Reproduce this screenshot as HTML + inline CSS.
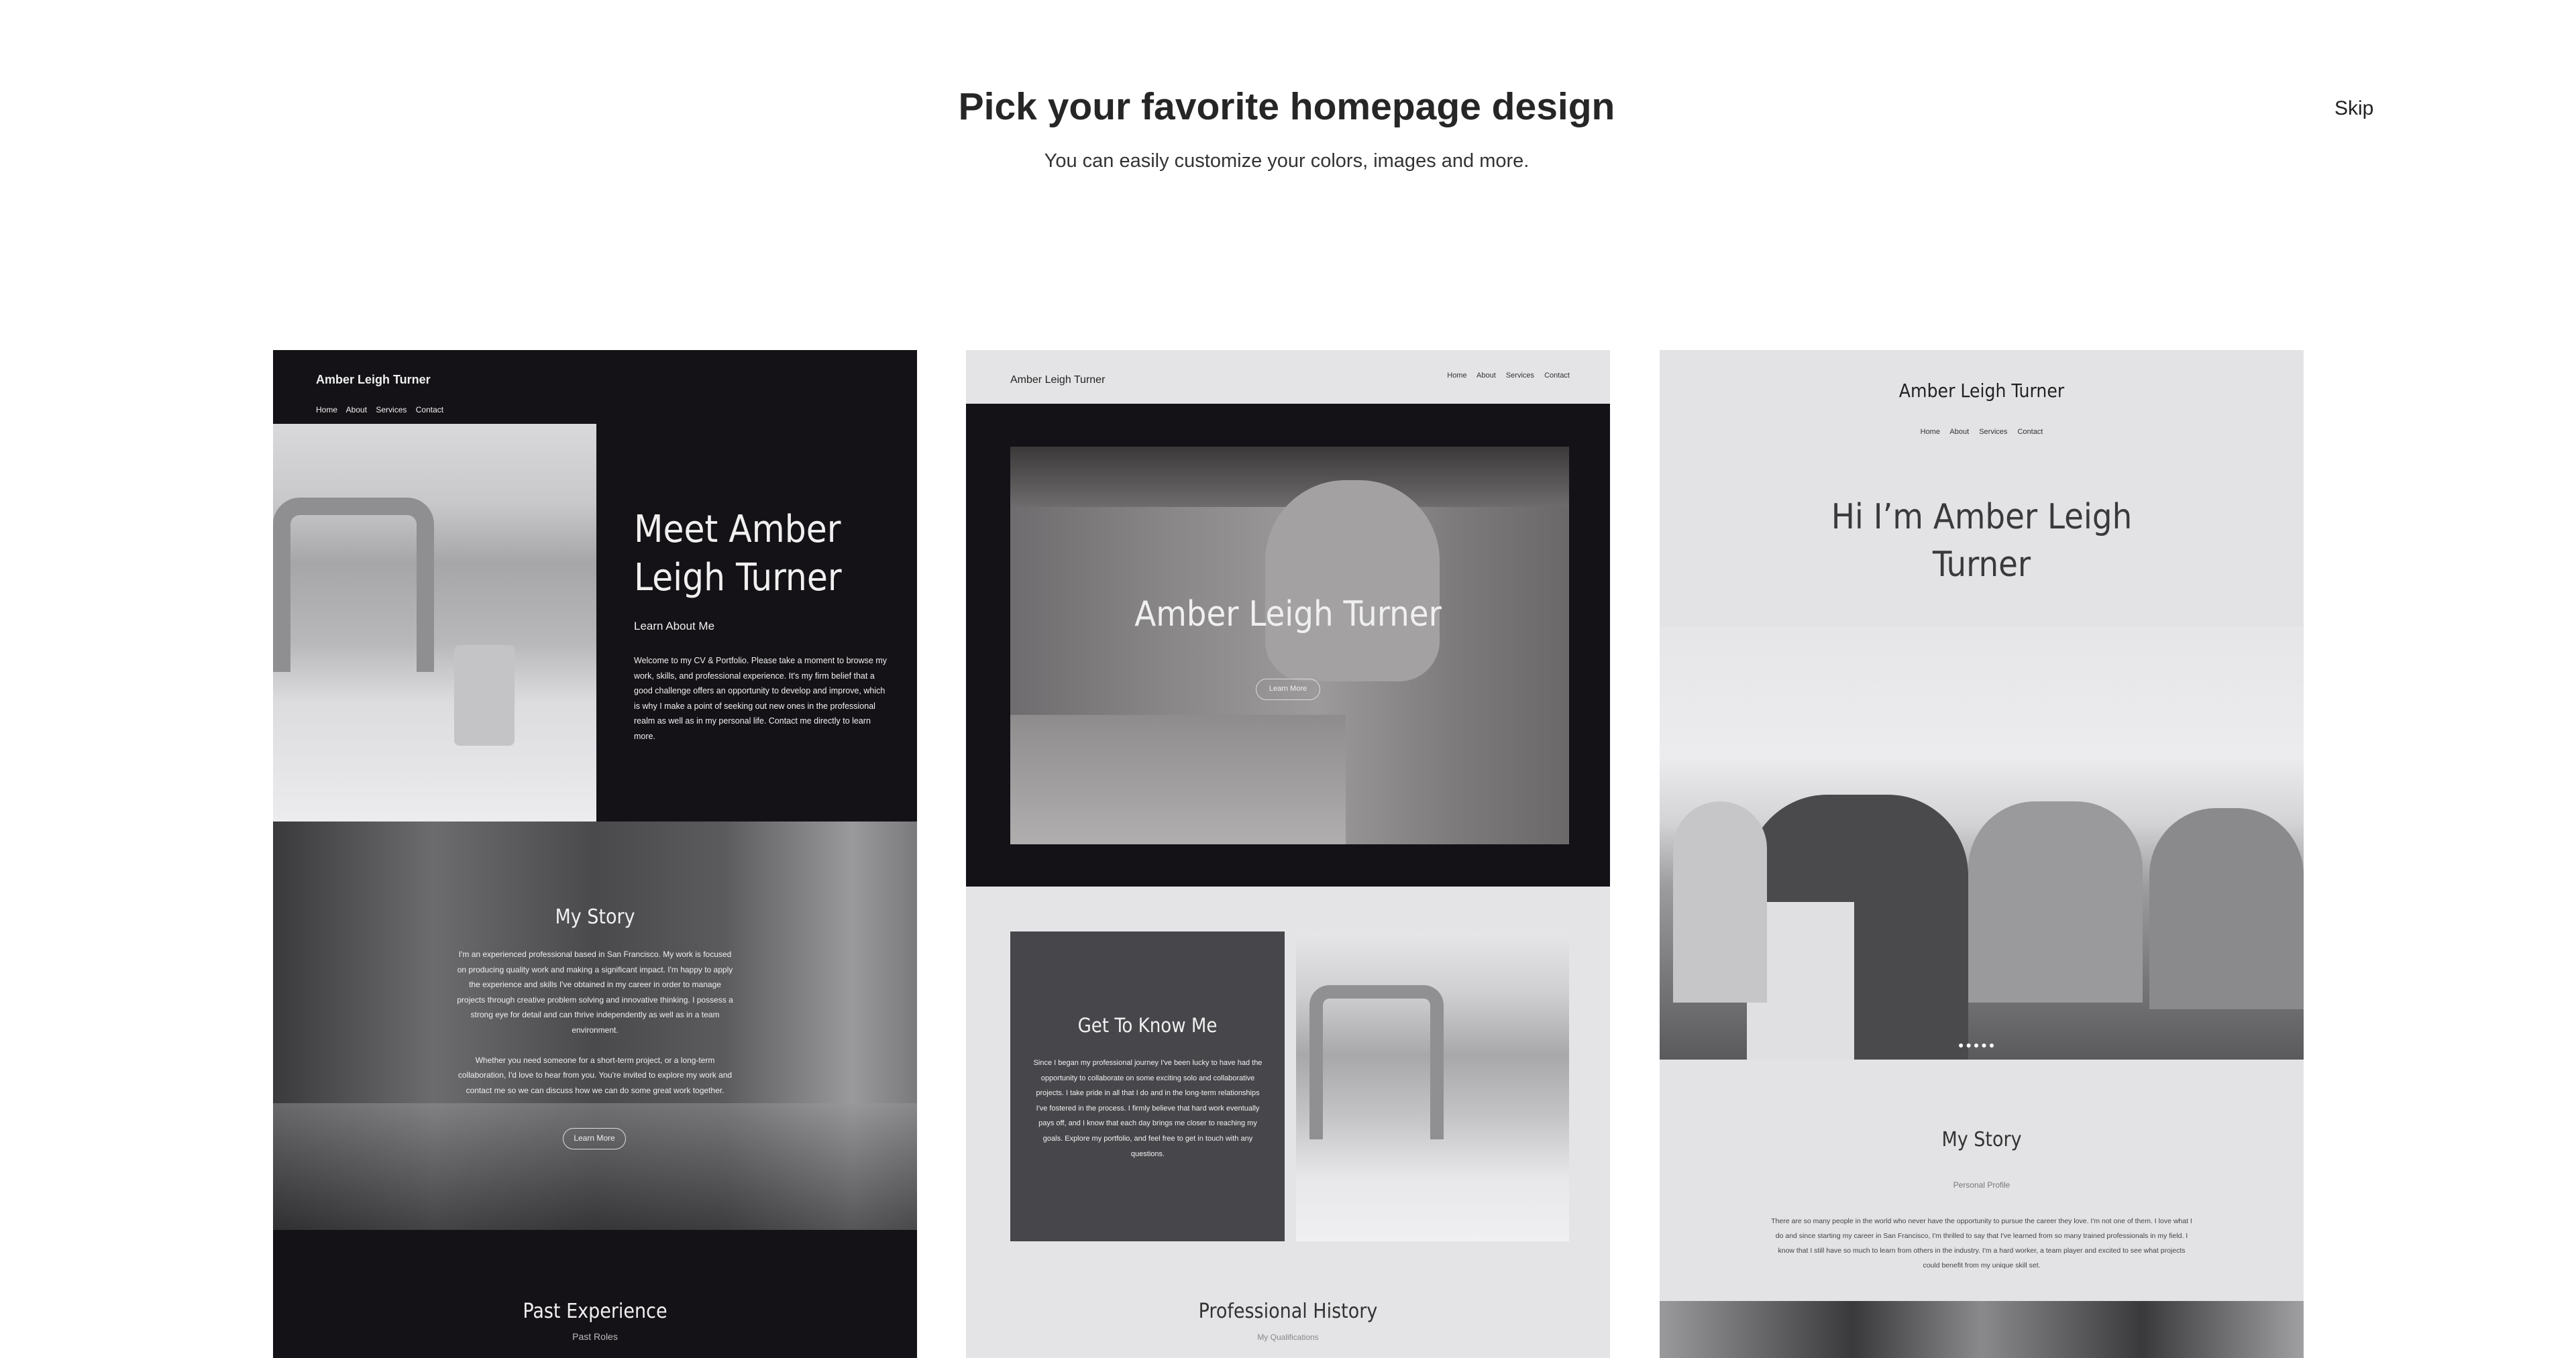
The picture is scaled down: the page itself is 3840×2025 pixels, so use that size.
<!DOCTYPE html>
<html><head><meta charset="utf-8"><style>
*{margin:0;padding:0;box-sizing:border-box}
body{width:3840px;height:2025px;background:#fff;position:relative;overflow:hidden;font-family:"Liberation Sans",sans-serif;color:#2b2b2b}
.a{position:absolute}
.c{text-align:center}
.card{position:absolute;top:522px;width:960px;height:1503px;overflow:hidden}
.ttl{font-family:"DejaVu Sans Condensed","DejaVu Sans",sans-serif;font-weight:normal}
.w{color:#f0f0f0}
</style></head><body>
<div class="a c" style="left:0;width:3836px;top:126px;font-size:57px;font-weight:bold;color:#262626">Pick your favorite homepage design</div>
<div class="a c" style="left:0;width:3836px;top:224px;font-size:29px;color:#333">You can easily customize your colors, images and more.</div>
<div class="a" style="left:3480px;top:145px;font-size:30px;color:#222">Skip</div>

<!-- card 1 -->
<div class="card" style="left:407px;background:#141216">
 <div class="a w" style="left:64px;top:34px;font-size:18px;font-weight:bold">Amber Leigh Turner</div>
 <div class="a w" style="left:64px;top:82px;font-size:12px;word-spacing:10px">Home About Services Contact</div>
 <div class="a" style="left:0;top:110px;width:482px;height:593px;background:linear-gradient(180deg,#d9d9db 0%,#c8c8ca 20%,#a6a6a8 35%,#b8b8ba 55%,#dcdcde 70%,#ececee 100%)">
  <div class="a" style="left:0;top:110px;width:240px;height:260px;border:26px solid #8f8f91;border-radius:40px 40px 0 0;border-bottom:none"></div>
  <div class="a" style="left:270px;top:330px;width:90px;height:150px;background:#c4c4c6;border-radius:8px"></div>
 </div>
 <div class="a ttl w" style="left:538px;top:232px;font-size:56px;line-height:72px">Meet Amber<br>Leigh Turner</div>
 <div class="a w" style="left:538px;top:402px;font-size:17px">Learn About Me</div>
 <div class="a w" style="left:538px;top:452px;width:380px;font-size:12.5px;line-height:22.6px">Welcome to my CV &amp; Portfolio. Please take a moment to browse my work, skills, and professional experience. It's my firm belief that a good challenge offers an opportunity to develop and improve, which is why I make a point of seeking out new ones in the professional realm as well as in my personal life. Contact me directly to learn more.</div>
 <div class="a" style="left:0;top:703px;width:960px;height:609px;background:linear-gradient(90deg,#3a393c 0%,#6c6b6e 25%,#4a494c 50%,#5b5a5d 70%,#9a999c 90%,#7a797c 100%)">
  <div class="a" style="left:0;top:420px;width:960px;height:189px;background:linear-gradient(180deg,rgba(150,150,152,.5),rgba(40,40,42,.6))"></div>
 </div>
 <div class="a ttl c w" style="left:0;width:960px;top:828px;font-size:30px">My Story</div>
 <div class="a c w" style="left:270px;width:420px;top:890px;font-size:12px;line-height:22.5px">I'm an experienced professional based in San Francisco. My work is focused on producing quality work and making a significant impact. I'm happy to apply the experience and skills I've obtained in my career in order to manage projects through creative problem solving and innovative thinking. I possess a strong eye for detail and can thrive independently as well as in a team environment.<br><br>Whether you need someone for a short-term project, or a long-term collaboration, I'd love to hear from you. You're invited to explore my work and contact me so we can discuss how we can do some great work together.</div>
 <div class="a c w" style="left:432px;top:1160px;width:94px;height:32px;border:1.5px solid #ddd;border-radius:16px;font-size:12px;line-height:29px">Learn More</div>
 <div class="a ttl c w" style="left:0;width:960px;top:1416px;font-size:30px">Past Experience</div>
 <div class="a c" style="left:0;width:960px;top:1463px;font-size:14px;color:#bbb">Past Roles</div>
</div>

<!-- card 2 -->
<div class="card" style="left:1440px;background:#e4e4e6">
 <div class="a" style="left:66px;top:36px;font-size:16px;color:#222">Amber Leigh Turner</div>
 <div class="a" style="right:60px;top:32px;font-size:11px;color:#333;word-spacing:12px">Home About Services Contact</div>
 <div class="a" style="left:0;top:80px;width:960px;height:720px;background:#141216"></div>
 <div class="a" style="left:66px;top:144px;width:833px;height:593px;background:linear-gradient(90deg,#6e6c6e 0%,#8a8888 30%,#9c9a9a 55%,#7c7a7a 80%,#6a6868 100%)">
  <div class="a" style="left:0;top:0;width:833px;height:90px;background:linear-gradient(180deg,#3a3838,#6e6c6c)"></div>
  <div class="a" style="left:0;top:400px;width:500px;height:193px;background:linear-gradient(180deg,#8e8c8c,#b0aeae)"></div>
  <div class="a" style="left:380px;top:50px;width:260px;height:300px;border-radius:120px 120px 60px 60px;background:#a3a1a1"></div>
 </div>
 <div class="a ttl c w" style="left:0;width:960px;top:364px;font-size:52px">Amber Leigh Turner</div>
 <div class="a c w" style="left:432px;top:490px;width:96px;height:32px;border:1.5px solid #ddd;border-radius:16px;font-size:11px;line-height:29px">Learn More</div>
 <div class="a" style="left:66px;top:867px;width:409px;height:462px;background:#47464a"></div>
 <div class="a ttl c w" style="left:66px;width:409px;top:990px;font-size:29px">Get To Know Me</div>
 <div class="a c w" style="left:96px;width:350px;top:1052px;font-size:11px;line-height:22.6px">Since I began my professional journey I've been lucky to have had the opportunity to collaborate on some exciting solo and collaborative projects. I take pride in all that I do and in the long-term relationships I've fostered in the process. I firmly believe that hard work eventually pays off, and I know that each day brings me closer to reaching my goals. Explore my portfolio, and feel free to get in touch with any questions.</div>
 <div class="a" style="left:492px;top:867px;width:407px;height:462px;background:linear-gradient(180deg,#e6e6e8 0%,#cfcfd1 20%,#a8a8aa 40%,#c4c4c6 60%,#e8e8ea 80%,#f0f0f2 100%)">
  <div class="a" style="left:20px;top:80px;width:200px;height:230px;border:20px solid #909092;border-radius:30px 30px 0 0;border-bottom:none"></div>
 </div>
 <div class="a ttl c" style="left:0;width:960px;top:1416px;font-size:30px;color:#333">Professional History</div>
 <div class="a c" style="left:0;width:960px;top:1465px;font-size:12px;color:#888">My Qualifications</div>
</div>

<!-- card 3 -->
<div class="card" style="left:2474px;background:#e3e3e5">
 <div class="a ttl c" style="left:0;width:960px;top:44px;font-size:28px;color:#222">Amber Leigh Turner</div>
 <div class="a c" style="left:0;width:960px;top:116px;font-size:11px;color:#333;word-spacing:12px">Home About Services Contact</div>
 <div class="a ttl c" style="left:0;width:960px;top:214px;font-size:52px;line-height:71px;color:#3a3a3c">Hi I’m Amber Leigh<br>Turner</div>
 <div class="a" style="left:0;top:413px;width:960px;height:645px;background:linear-gradient(180deg,#e6e6e8 0%,#ececee 30%,#d4d4d6 45%,#9c9c9e 60%,#7a7a7c 80%,#5a5a5c 100%)">
  <div class="a" style="left:130px;top:250px;width:330px;height:395px;background:#4a494c;border-radius:120px 120px 0 0"></div>
  <div class="a" style="left:130px;top:410px;width:160px;height:235px;background:#e0e0e2"></div>
  <div class="a" style="left:460px;top:260px;width:260px;height:300px;background:#9a999b;border-radius:100px 100px 0 0"></div>
  <div class="a" style="left:730px;top:270px;width:230px;height:300px;background:#8a898b;border-radius:100px 100px 0 0"></div>
  <div class="a" style="left:20px;top:260px;width:140px;height:300px;background:#c6c6c8;border-radius:70px 70px 0 0"></div>
 </div>
 <div class="a" style="left:445px;top:1028px;font-size:14px;color:#fff;letter-spacing:3px">●●●●●</div>
 <div class="a ttl c" style="left:0;width:960px;top:1160px;font-size:30px;color:#333">My Story</div>
 <div class="a c" style="left:0;width:960px;top:1238px;font-size:12px;color:#777">Personal Profile</div>
 <div class="a c" style="left:165px;width:630px;top:1288px;font-size:10.5px;line-height:22px;color:#444">There are so many people in the world who never have the opportunity to pursue the career they love. I'm not one of them. I love what I do and since starting my career in San Francisco, I'm thrilled to say that I've learned from so many trained professionals in my field. I know that I still have so much to learn from others in the industry. I'm a hard worker, a team player and excited to see what projects could benefit from my unique skill set.</div>
 <div class="a" style="left:0;top:1418px;width:960px;height:90px;background:linear-gradient(90deg,#9a9a9c 0%,#3a393c 30%,#8a898b 50%,#3a393c 75%,#a0a0a2 100%)"></div>
</div>
</body></html>
